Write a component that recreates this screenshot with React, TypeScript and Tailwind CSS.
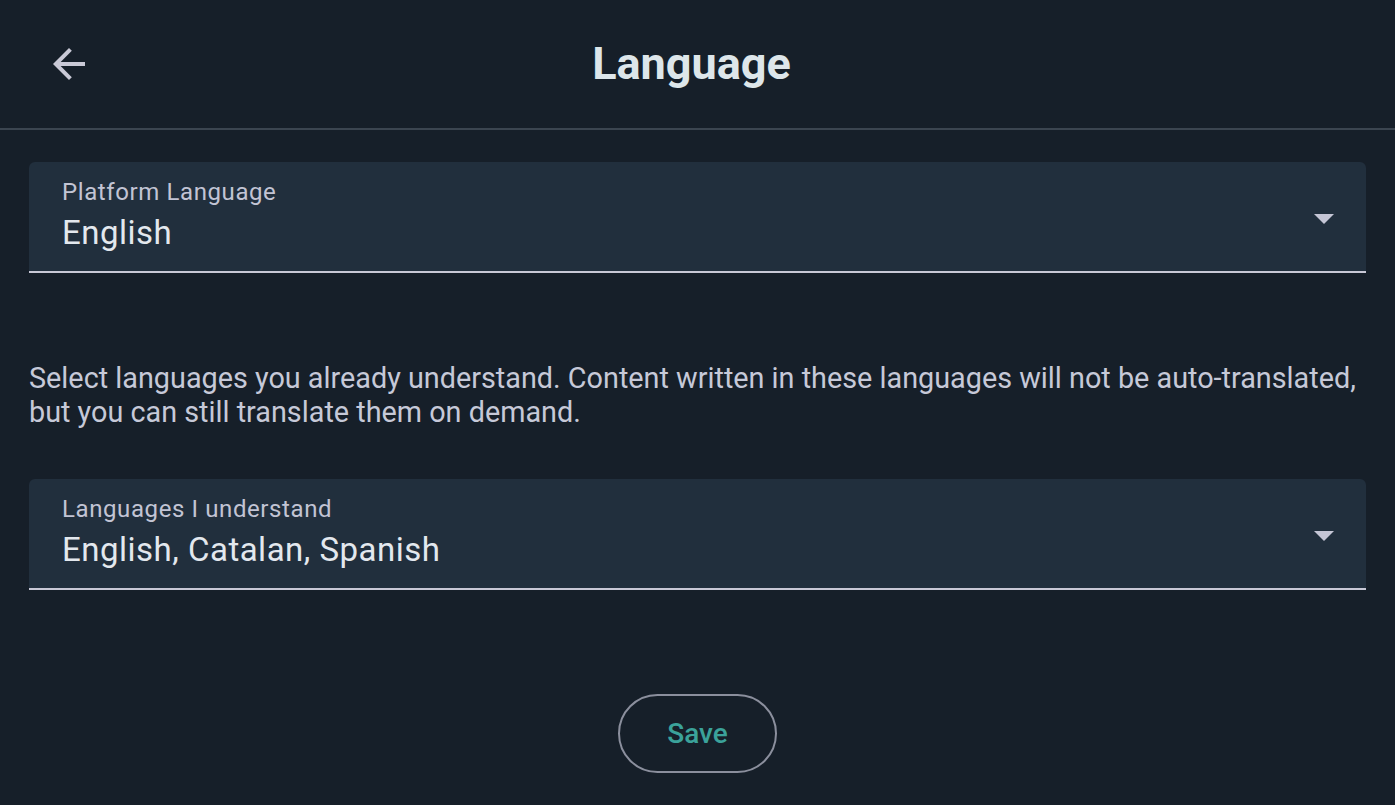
import React from "react";

function ArrowBack() {
  return (
    <svg width="48" height="48" viewBox="0 0 24 24" fill="#c9c9d6">
      <path d="M20 11H7.83l5.59-5.59L12 4l-8 8 8 8 1.41-1.41L7.83 13H20v-2z" />
    </svg>
  );
}

function SelectField({ label, value }: { label: string; value: string }) {
  return (
    <div className="relative flex items-start rounded-t-[6px] border-b-2 border-[#c8c8d6] bg-[#212f3d] pl-[33px] pr-[30px] pt-[18px] pb-[22px]">
      <div className="flex flex-1 flex-col gap-[12px]">
        <div className="text-[24px] leading-[24px] tracking-[0.6px] text-[#c2c4d4]">{label}</div>
        <div className="text-[33px] leading-[33px] tracking-[0.5px] text-[#e3e8ee]">{value}</div>
      </div>
      <svg width="20" height="10" viewBox="0 0 20 10" className="mr-[2px] mt-[34px]">
        <path d="M0 0h20L10 10z" fill="#c5c6d6" />
      </svg>
    </div>
  );
}

export default function App() {
  return (
    <div
      className="min-h-screen w-full bg-[#161f29]"
      style={{ fontFamily: "Roboto, 'Noto Sans', sans-serif" }}
    >
      <header className="relative flex h-[130px] items-center justify-center border-b-2 border-[#3b4550] pr-[12px]">
        <button className="absolute left-[45px] top-[40px] flex h-[48px] w-[48px] items-center justify-center">
          <ArrowBack />
        </button>
        <h1 className="text-[45px] font-bold text-[#dde6ea]">Language</h1>
      </header>

      <main className="flex flex-col px-[29px] pt-[32px]">
        <SelectField label="Platform Language" value="English" />

        <p className="mt-[88px] text-[28.8px] leading-[34px] text-[#c6c9d8]">
          Select languages you already understand. Content written in these languages will not be auto-translated,
          but you can still translate them on demand.
        </p>

        <div className="mt-[50px]">
          <SelectField label="Languages I understand" value="English, Catalan, Spanish" />
        </div>

        <div className="mt-[104px] flex justify-center">
          <button className="flex h-[79px] w-[159px] items-center justify-center rounded-full border-2 border-[#8b8f9d] text-[28px] font-medium text-[#3ba29a]">
            Save
          </button>
        </div>
      </main>
    </div>
  );
}
